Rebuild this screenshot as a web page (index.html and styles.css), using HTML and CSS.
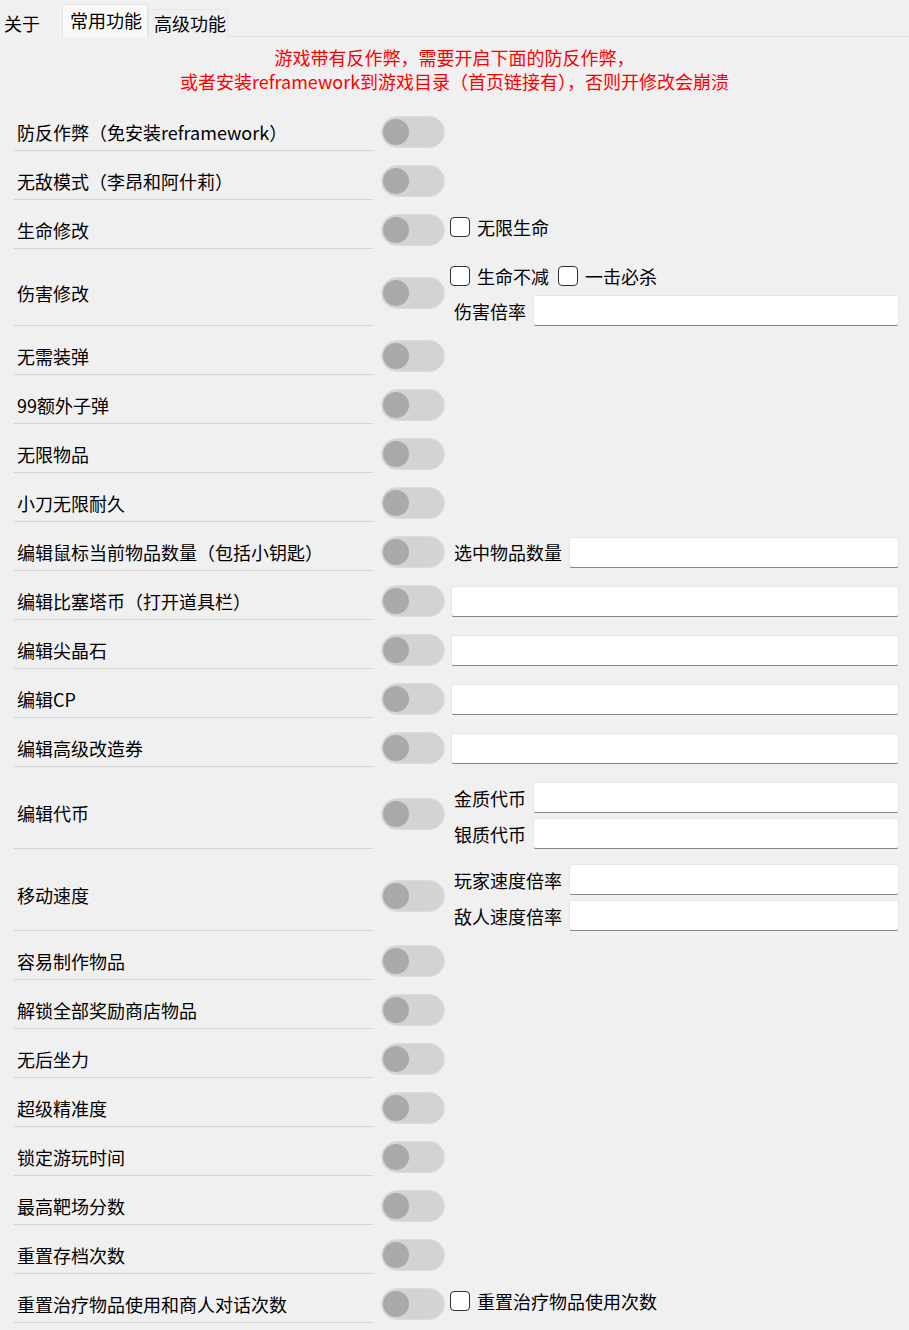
FILE: index.html
```html
<!DOCTYPE html>
<html lang="zh-CN">
<head>
<meta charset="utf-8">
<title>常用功能</title>
<link rel="stylesheet" href="styles.css">
</head>
<body>
<div class="tabs">
  <div class="tab first">关于</div>
  <div class="tab active">常用功能</div>
  <div class="tab">高级功能</div>
</div>
<div class="notice">游戏带有反作弊，需要开启下面的防反作弊，<br>或者安装reframework到游戏目录（首页链接有），否则开修改会崩溃</div>
<div class="list">
  <div class="row"><div class="label">防反作弊（免安装reframework）</div><div class="toggle"><span class="knob"></span></div></div>
  <div class="row"><div class="label">无敌模式（李昂和阿什莉）</div><div class="toggle"><span class="knob"></span></div></div>
  <div class="row"><div class="label">生命修改</div><div class="toggle"><span class="knob"></span></div>
    <div class="extra"><div class="checks lift"><label class="check"><span class="box"></span>无限生命</label></div></div></div>
  <div class="row"><div class="label">伤害修改</div><div class="toggle"><span class="knob"></span></div>
    <div class="extra stack">
      <div class="checks"><label class="check"><span class="box"></span>生命不减</label><label class="check"><span class="box"></span>一击必杀</label></div>
      <div class="field"><span class="flabel">伤害倍率</span><span class="input"></span></div>
    </div></div>
  <div class="row"><div class="label">无需装弹</div><div class="toggle"><span class="knob"></span></div></div>
  <div class="row"><div class="label">99额外子弹</div><div class="toggle"><span class="knob"></span></div></div>
  <div class="row"><div class="label">无限物品</div><div class="toggle"><span class="knob"></span></div></div>
  <div class="row"><div class="label">小刀无限耐久</div><div class="toggle"><span class="knob"></span></div></div>
  <div class="row"><div class="label">编辑鼠标当前物品数量（包括小钥匙）</div><div class="toggle"><span class="knob"></span></div>
    <div class="extra"><div class="field"><span class="flabel">选中物品数量</span><span class="input"></span></div></div></div>
  <div class="row"><div class="label">编辑比塞塔币（打开道具栏）</div><div class="toggle"><span class="knob"></span></div>
    <div class="extra"><div class="field"><span class="input"></span></div></div></div>
  <div class="row"><div class="label">编辑尖晶石</div><div class="toggle"><span class="knob"></span></div>
    <div class="extra"><div class="field"><span class="input"></span></div></div></div>
  <div class="row"><div class="label">编辑CP</div><div class="toggle"><span class="knob"></span></div>
    <div class="extra"><div class="field"><span class="input"></span></div></div></div>
  <div class="row"><div class="label">编辑高级改造券</div><div class="toggle"><span class="knob"></span></div>
    <div class="extra"><div class="field"><span class="input"></span></div></div></div>
  <div class="row"><div class="label">编辑代币</div><div class="toggle"><span class="knob"></span></div>
    <div class="extra stack two">
      <div class="field"><span class="flabel">金质代币</span><span class="input"></span></div>
      <div class="field"><span class="flabel">银质代币</span><span class="input"></span></div>
    </div></div>
  <div class="row"><div class="label">移动速度</div><div class="toggle"><span class="knob"></span></div>
    <div class="extra stack two">
      <div class="field"><span class="flabel">玩家速度倍率</span><span class="input"></span></div>
      <div class="field"><span class="flabel">敌人速度倍率</span><span class="input"></span></div>
    </div></div>
  <div class="row"><div class="label">容易制作物品</div><div class="toggle"><span class="knob"></span></div></div>
  <div class="row"><div class="label">解锁全部奖励商店物品</div><div class="toggle"><span class="knob"></span></div></div>
  <div class="row"><div class="label">无后坐力</div><div class="toggle"><span class="knob"></span></div></div>
  <div class="row"><div class="label">超级精准度</div><div class="toggle"><span class="knob"></span></div></div>
  <div class="row"><div class="label">锁定游玩时间</div><div class="toggle"><span class="knob"></span></div></div>
  <div class="row"><div class="label">最高靶场分数</div><div class="toggle"><span class="knob"></span></div></div>
  <div class="row"><div class="label">重置存档次数</div><div class="toggle"><span class="knob"></span></div></div>
  <div class="row"><div class="label">重置治疗物品使用和商人对话次数</div><div class="toggle"><span class="knob"></span></div>
    <div class="extra"><div class="checks lift"><label class="check"><span class="box"></span>重置治疗物品使用次数</label></div></div></div>
</div>
</body>
</html>
```

FILE: styles.css
```css
* { box-sizing: border-box; }
html, body {
  margin: 0;
  padding: 0;
  background: #f0f0f0;
}
body {
  font-family: "Noto Sans CJK SC", "Noto Sans", sans-serif;
  font-size: 18px;
  line-height: 24px;
  color: #000;
}
.tabs {
  display: flex;
  align-items: flex-end;
  height: 37px;
  border-bottom: 1px solid #e3e3e3;
}
.tab {
  height: 28px;
  margin-bottom: -1px;
  padding: 0 1px 0 5px;
  line-height: 26px;
  border: 1px solid #e6e6e6;
  border-bottom: none;
  background: #f0f0f0;
  white-space: nowrap;
}
.tab.first {
  width: 62px;
  padding-left: 3px;
  border-color: #f0f0f0;
}
.tab.active {
  height: 33px;
  padding: 0 5px 0 7px;
  line-height: 31px;
  background: #f9f9f9;
  border-color: #e3e3e3;
}
.notice {
  color: #ff0000;
  text-align: center;
  padding-top: 8px;
}
.list {
  padding: 9px 10px 0 14px;
}
.row {
  display: flex;
  align-items: center;
  margin-top: 11px;
}
.label {
  flex: 0 0 359px;
  align-self: stretch;
  min-height: 38px;
  display: flex;
  align-items: center;
  padding-left: 3px;
  border-bottom: 1px solid #d4d4d4;
  white-space: nowrap;
}
.toggle {
  position: relative;
  flex: 0 0 64px;
  height: 32px;
  margin-left: 8px;
  border-radius: 16px;
  background: #d3d3d3;
  border: 1px solid #dcdcdc;
}
.knob {
  position: absolute;
  left: 1px;
  top: 2px;
  width: 26px;
  height: 26px;
  border-radius: 50%;
  background: #a9a9a9;
}
.extra {
  flex: 1;
  margin-left: 5px;
  display: flex;
  flex-direction: column;
}
.extra.stack { gap: 4px; }
.extra.two { gap: 5px; padding-top: 4px; }
.checks {
  display: flex;
  align-items: center;
  height: 31px;
  gap: 9px;
}
.checks.lift { margin-bottom: 6px; }
.check {
  display: flex;
  align-items: center;
  gap: 7px;
  white-space: nowrap;
}
.box {
  width: 20px;
  height: 20px;
  border: 1px solid #333;
  border-radius: 4px;
  background: #fff;
}
.field {
  display: flex;
  align-items: center;
  height: 31px;
}
.flabel {
  padding-left: 4px;
  margin-right: 7px;
  white-space: nowrap;
}
.input {
  flex: 1;
  height: 31px;
  margin-left: 1px;
  background: #fff;
  border: 1px solid #e6e6e6;
  border-bottom: 1px solid #858585;
  border-radius: 3px;
}
.flabel + .input { margin-left: 0; }
```
